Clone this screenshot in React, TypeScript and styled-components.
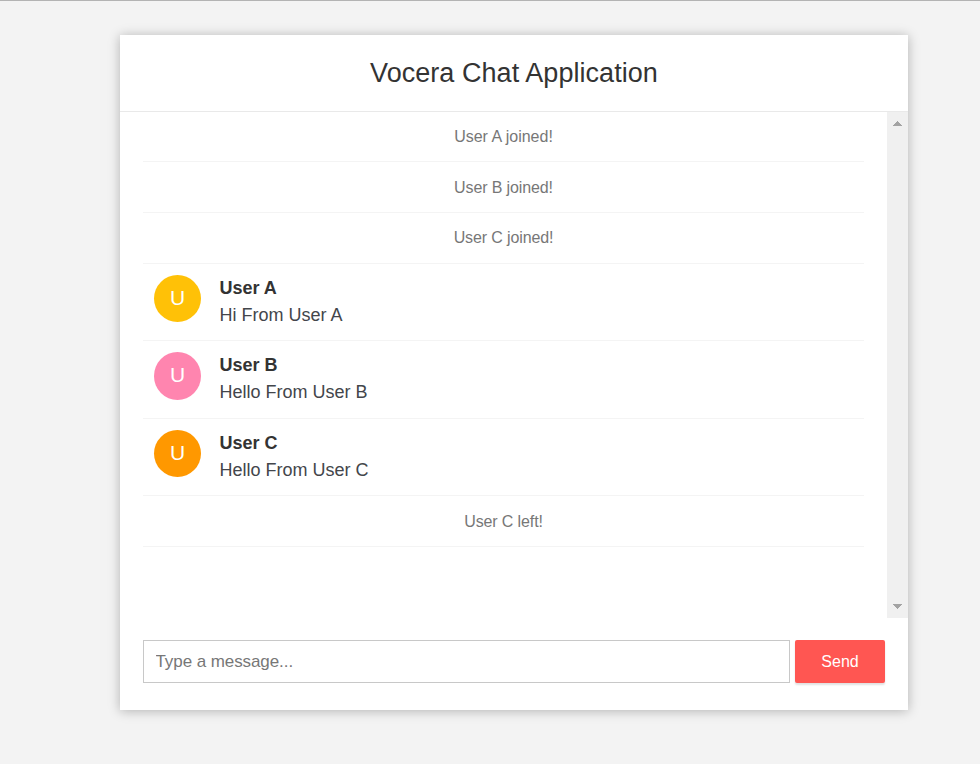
import React from "react";
import styled, { createGlobalStyle } from "styled-components";

const GlobalStyle = createGlobalStyle`
  * { box-sizing: border-box; }
  html, body { margin: 0; padding: 0; }
  body {
    height: 764px;
    overflow: hidden;
    background: #f3f3f3;
    font-family: "Liberation Sans", Arial, sans-serif;
    color: #333;
  }
`;

const Page = styled.div`
  height: 764px;
  padding: 34px 0 0 120px;
  border-top: 1px solid #b3b3b3;
`;

const Card = styled.main`
  width: 788px;
  height: 675px;
  display: flex;
  flex-direction: column;
  background: #fff;
  box-shadow: 0 1px 11px rgba(0, 0, 0, 0.27);
`;

const Header = styled.header`
  height: 77px;
  flex: none;
  border-bottom: 1px solid #e9e9e9;
  text-align: center;
`;

const Title = styled.h2`
  margin: 0;
  padding-top: 22px;
  font-size: 27px;
  line-height: 32px;
  font-weight: 500;
  letter-spacing: 0.05px;
`;

const Body = styled.div`
  height: 506px;
  flex: none;
  display: flex;
`;

const List = styled.ul`
  flex: 1;
  margin: 0;
  padding: 0 23px;
  list-style: none;
`;

const EventRow = styled.li<{ $h: number; $line: number; $spacing: number }>`
  height: ${(p) => p.$h}px;
  border-bottom: 1px solid #f4f4f4;
  text-align: center;
  color: #777;
  font-size: 16px;
  line-height: ${(p) => p.$line}px;
  letter-spacing: ${(p) => p.$spacing}px;
`;

const MessageRow = styled.li<{ $h: number }>`
  height: ${(p) => p.$h}px;
  display: flex;
  align-items: flex-start;
  gap: 18.5px;
  padding: 11px 0 0 11px;
  border-bottom: 1px solid #f4f4f4;
`;

const Avatar = styled.span<{ $color: string; $h: number }>`
  width: 47px;
  height: ${(p) => p.$h}px;
  border-radius: 50%;
  background: ${(p) => p.$color};
  color: #fff;
  font-size: 21px;
  line-height: 46px;
  text-align: center;
`;

const Sender = styled.div`
  font-size: 18px;
  line-height: 27px;
  font-weight: 700;
`;

const Text = styled.p`
  margin: 0;
  font-size: 18px;
  line-height: 27px;
  color: #43464b;
`;

const Scrollbar = styled.div`
  width: 21px;
  display: flex;
  flex-direction: column;
  justify-content: space-between;
  align-items: center;
  padding: 9px 0;
  background: #f0f0f0;
`;

const Arrow = styled.svg`
  display: block;
  width: 9px;
  height: 5px;
  fill: #a3a3a3;
  shape-rendering: crispEdges;
`;

const Form = styled.form`
  display: flex;
  gap: 5px;
  padding: 22px 23px 0;
`;

const Input = styled.input`
  width: 647px;
  height: 43px;
  padding: 0 11.5px;
  border: 1px solid #c8c8c8;
  border-radius: 0;
  background: #fff;
  font: 17px "Liberation Sans", Arial, sans-serif;
  letter-spacing: -0.08px;
  outline: none;
  &::placeholder { color: #777; opacity: 1; }
`;

const Send = styled.button`
  width: 90px;
  height: 43px;
  padding: 0;
  border: 0;
  border-radius: 2px;
  background: #ff5652;
  box-shadow: 0 2px 2px rgba(0, 0, 0, 0.12);
  color: #fff;
  font: 16px "Liberation Sans", Arial, sans-serif;
`;

type Item =
  | { kind: "event"; text: string; h: number; line: number; spacing: number }
  | { kind: "chat"; sender: string; text: string; color: string; h: number; avatar: number };

const items: Item[] = [
  { kind: "event", text: "User A joined!", h: 50, line: 50, spacing: 0 },
  { kind: "event", text: "User B joined!", h: 51, line: 52, spacing: -0.12 },
  { kind: "event", text: "User C joined!", h: 51, line: 50, spacing: -0.12 },
  { kind: "chat", sender: "User A", text: "Hi From User A", color: "#ffc107", h: 77, avatar: 47 },
  { kind: "chat", sender: "User B", text: "Hello From User B", color: "#ff85af", h: 78, avatar: 48 },
  { kind: "chat", sender: "User C", text: "Hello From User C", color: "#ff9800", h: 77, avatar: 47 },
  { kind: "event", text: "User C left!", h: 51, line: 52, spacing: -0.12 },
];

export default function App() {
  return (
    <>
      <GlobalStyle />
      <Page>
        <Card>
          <Header>
            <Title>Vocera Chat Application</Title>
          </Header>
          <Body>
            <List>
              {items.map((m, i) =>
                m.kind === "event" ? (
                  <EventRow key={i} $h={m.h} $line={m.line} $spacing={m.spacing}>
                    {m.text}
                  </EventRow>
                ) : (
                  <MessageRow key={i} $h={m.h}>
                    <Avatar $color={m.color} $h={m.avatar}>{m.sender[0]}</Avatar>
                    <div>
                      <Sender>{m.sender}</Sender>
                      <Text>{m.text}</Text>
                    </div>
                  </MessageRow>
                )
              )}
            </List>
            <Scrollbar>
              <Arrow viewBox="0 0 9 5">
                <path d="M4 0h1v1h1v1h1v1h1v1h1v1H0V4h1V3h1V2h1V1h1z" />
              </Arrow>
              <Arrow viewBox="0 0 9 5">
                <path d="M0 0h9v1H8v1H7v1H6v1H5v1H4V4H3V3H2V2H1V1H0z" />
              </Arrow>
            </Scrollbar>
          </Body>
          <Form onSubmit={(e) => e.preventDefault()}>
            <Input placeholder="Type a message..." />
            <Send type="submit">Send</Send>
          </Form>
        </Card>
      </Page>
    </>
  );
}
